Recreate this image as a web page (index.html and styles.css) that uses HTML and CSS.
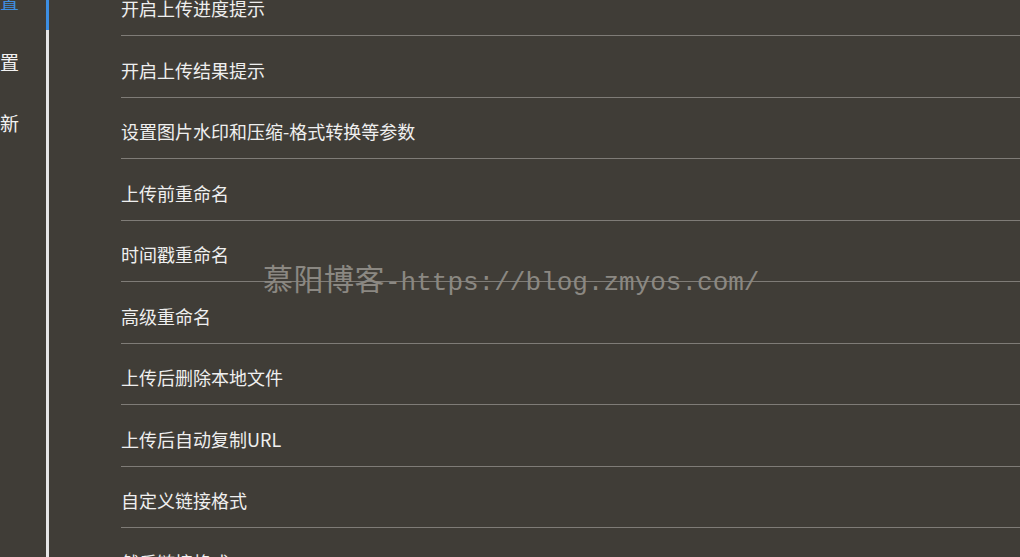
FILE: index.html
```html
<!DOCTYPE html>
<html lang="zh-CN">
<head>
<meta charset="utf-8">
<title>设置</title>
<link rel="stylesheet" href="styles.css">
</head>
<body>
<div class="app">
  <nav class="side">
    <div class="side-item active">置</div>
    <div class="side-item">置</div>
    <div class="side-item">新</div>
  </nav>
  <div class="rail"><div class="rail-thumb"></div></div>
  <main class="main">
    <ul class="list">
      <li class="row">开启上传进度提示</li>
      <li class="row">开启上传结果提示</li>
      <li class="row">设置图片水印和压缩-格式转换等参数</li>
      <li class="row">上传前重命名</li>
      <li class="row">时间戳重命名</li>
      <li class="row">高级重命名</li>
      <li class="row">上传后删除本地文件</li>
      <li class="row">上传后自动复制URL</li>
      <li class="row">自定义链接格式</li>
      <li class="row">然后链接格式</li>
    </ul>
  </main>
  <div class="watermark"><span class="wm-cn">慕阳博客</span><span class="wm-url">-https://blog.zmyos.com/</span></div>
</div>
</body>
</html>
```
FILE: styles.css
```css
html, body {
  margin: 0;
  padding: 0;
  height: 100%;
  background: #403d37;
  overflow: hidden;
}
body {
  font-family: "Noto Sans CJK SC", "Noto Sans", sans-serif;
  color: #efefef;
}
.app {
  position: relative;
  display: flex;
  height: 557px;
  overflow: hidden;
}
.side {
  width: 46px;
  flex-shrink: 0;
  margin-top: -30px;
}
.side-item {
  height: 61px;
  line-height: 61px;
  font-size: 19px;
  color: #f2f2f2;
}
.side-item.active {
  color: #3f8fe0;
}
.rail {
  width: 3px;
  flex-shrink: 0;
  background: #e6e6e6;
}
.rail-thumb {
  height: 30px;
  background: #3d8fe3;
}
.main {
  flex: 1;
  padding-left: 72px;
}
.list {
  list-style: none;
  margin: -25.5px 0 0 0;
  padding: 0;
}
.row {
  box-sizing: border-box;
  height: 61.5px;
  padding-top: 21.5px;
  line-height: 24px;
  font-size: 18px;
  border-bottom: 1px solid #7f7c77;
  color: #efefef;
}
.watermark {
  position: absolute;
  left: 263px;
  top: 259px;
  color: #8b8882;
  white-space: nowrap;
  line-height: 36px;
  pointer-events: none;
}
.wm-cn {
  font-family: "Noto Sans CJK SC", sans-serif;
  font-size: 30px;
  letter-spacing: 0.5px;
}
.wm-url {
  font-family: "Liberation Mono", "DejaVu Sans Mono", monospace;
  font-size: 26px;
}
```
